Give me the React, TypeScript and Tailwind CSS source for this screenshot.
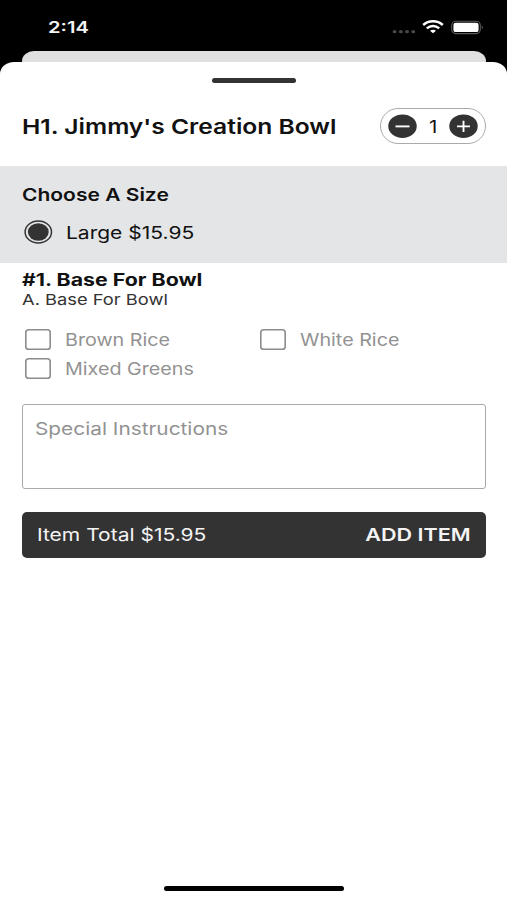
import { useState } from "react";
import type { ReactNode } from "react";
import clsx from "clsx";

const bases = ["Brown Rice", "White Rice", "Mixed Greens"];

// Wide lettering: Inter stretched sideways from its left edge
function Wide({ className, children }: { className?: string; children: ReactNode }) {
  return (
    <span className={clsx("inline-block origin-left whitespace-nowrap", className)}>
      {children}
    </span>
  );
}

function StatusBar() {
  return (
    <div className="flex h-[51px] items-start justify-between pl-12 pr-[23px] text-[#f4f4f4]">
      <Wide className="mt-[17px] scale-x-[1.3] text-[15.5px] leading-[22px] font-semibold">2:14</Wide>
      <div className="flex items-center pt-[19px]">
        <svg width="24" height="16" viewBox="0 0 24 16" fill="#484848">
          <ellipse cx="2.6" cy="12.7" rx="2" ry="1.6" />
          <ellipse cx="8.8" cy="12.7" rx="2" ry="1.6" />
          <ellipse cx="15" cy="12.7" rx="2" ry="1.6" />
          <ellipse cx="21.2" cy="12.7" rx="2" ry="1.6" />
        </svg>
        <svg className="ml-[6px]" width="22" height="16" viewBox="0 0 22 16" fill="none" stroke="#fff" strokeWidth="2.4">
          <path d="M1.2 6C6.6 1 15.4 1 20.8 6" />
          <path d="M4.8 9.3C8.4 6.2 13.6 6.2 17.2 9.3" />
          <path d="M11 14.3L8 11.8C9.7 10.3 12.3 10.3 14 11.8Z" fill="#fff" stroke="none" />
        </svg>
        <svg className="ml-[7px]" width="33" height="16" viewBox="0 0 33 16" fill="none">
          <rect x="0.7" y="2.2" width="28.6" height="12.4" rx="4" stroke="#5c5c5c" strokeWidth="1.1" />
          <rect x="2.4" y="3.7" width="25.2" height="9.4" rx="2.2" fill="#fff" />
          <path d="M30.8 6.5C32.4 7.1 32.4 9.7 30.8 10.3Z" fill="#5c5c5c" />
        </svg>
      </div>
    </div>
  );
}

function StepButton({ plus, onClick }: { plus?: boolean; onClick: () => void }) {
  return (
    <button onClick={onClick} aria-label={plus ? "Increase" : "Decrease"}>
      <svg width="29" height="24" viewBox="0 0 29 24">
        <ellipse cx="14.5" cy="12.2" rx="14.2" ry="11.8" fill="#333" />
        <path d={plus ? "M8 12.4H21M14.5 6.8V18" : "M7.5 12.4H21.5"} stroke="#fff" strokeWidth="1.9" />
      </svg>
    </button>
  );
}

function BaseOption({ label }: { label: string }) {
  const [checked, setChecked] = useState(false);
  return (
    <button className="flex h-[29.5px] items-center" onClick={() => setChecked(!checked)}>
      <svg width="26" height="21" viewBox="0 0 26 21" fill="none">
        <rect x="0.8" y="0.8" width="24.4" height="19.4" rx="2.8" stroke="#8c8c8c" strokeWidth="1.6" />
        {checked && <path d="M6 10.5L11 15L20 6" stroke="#333" strokeWidth="2" />}
      </svg>
      <Wide className="ml-[13.5px] scale-x-[1.16] pt-0.5 text-[17px] text-[#929292]">{label}</Wide>
    </button>
  );
}

export default function App() {
  const [count, setCount] = useState(1);

  return (
    <div className="flex h-[900px] w-[507px] flex-col overflow-hidden bg-black font-['Inter',sans-serif] text-[#111]">
      <StatusBar />
      <div className="ml-[22px] mr-[21px] h-[11px] rounded-t-[12px_10px] bg-[#e0e0e0]" />

      <div className="flex flex-1 flex-col rounded-t-[14px_12px] bg-white">
        <div className="mt-4 ml-[212px] h-[5px] w-[84px] rounded-full bg-[#333]" />

        {/* Item header */}
        <div className="flex h-[83px] items-center justify-between pl-[22px] pr-[21px] pb-px pt-1">
          <Wide className="scale-x-[1.2] pt-0.5 text-[20.5px] font-semibold">H1. Jimmy's Creation Bowl</Wide>
          <div className="flex h-9 w-[106px] items-center justify-between rounded-full border-[1.5px] border-[#aaa] px-[6.5px]">
            <StepButton onClick={() => setCount(Math.max(1, count - 1))} />
            <Wide className="-ml-0.5 scale-x-[1.2] pt-[3px] text-[17px]">{count}</Wide>
            <StepButton plus onClick={() => setCount(count + 1)} />
          </div>
        </div>

        {/* Size */}
        <div className="h-[97px] bg-[#e4e5e7] pl-[22px] pt-[17px]">
          <h2 className="flex text-[17.5px] leading-6 font-semibold">
            <Wide className="scale-x-[1.2]">Choose A Size</Wide>
          </h2>
          <label className="mt-[13px] flex h-6 items-center pl-0.5">
            <svg width="29" height="24" viewBox="0 0 29 24">
              <ellipse cx="14.3" cy="12" rx="13.2" ry="11" fill="none" stroke="#333" strokeWidth="1.5" />
              <ellipse cx="14.3" cy="12" rx="10.4" ry="8.7" fill="#333" />
            </svg>
            <Wide className="ml-[12.5px] scale-x-[1.2] pt-0.5 text-[17.5px]">Large $15.95</Wide>
          </label>
        </div>

        {/* Base */}
        <div className="flex flex-col pt-[6px] pl-[22px] pr-[21px]">
          <h2 className="flex text-[17px] leading-[22px] font-bold">
            <Wide className="scale-x-[1.255]">#1. Base For Bowl</Wide>
          </h2>
          <p className="flex text-[15px] leading-[18px] text-[#333]">
            <Wide className="scale-x-[1.22]">A. Base For Bowl</Wide>
          </p>
          <div className="mt-[15.5px] grid grid-cols-[235px_1fr] pl-[3px]">
            {bases.map((base) => (
              <BaseOption key={base} label={base} />
            ))}
          </div>

          <div className="mt-[20.5px] h-[85px] rounded-[3px] border-[1.5px] border-[#aaa] pl-3 pt-3">
            <Wide className="scale-x-[1.19] text-[17.5px] leading-6 text-[#929292]">Special Instructions</Wide>
          </div>

          <button className="mt-[22.5px] flex h-[46px] items-center justify-between rounded-[5px] bg-[#333] pl-[15px] pr-[15.5px] text-[#f4f4f4]">
            <Wide className="scale-x-[1.2] pt-px text-[17.5px]">Item Total $15.95</Wide>
            <Wide className="origin-right scale-x-[1.23] pt-px text-[17.5px] font-semibold">ADD ITEM</Wide>
          </button>
        </div>

        <div className="mt-auto mb-[9px] ml-[164px] h-[5px] w-[180px] rounded-full bg-black" />
      </div>
    </div>
  );
}
